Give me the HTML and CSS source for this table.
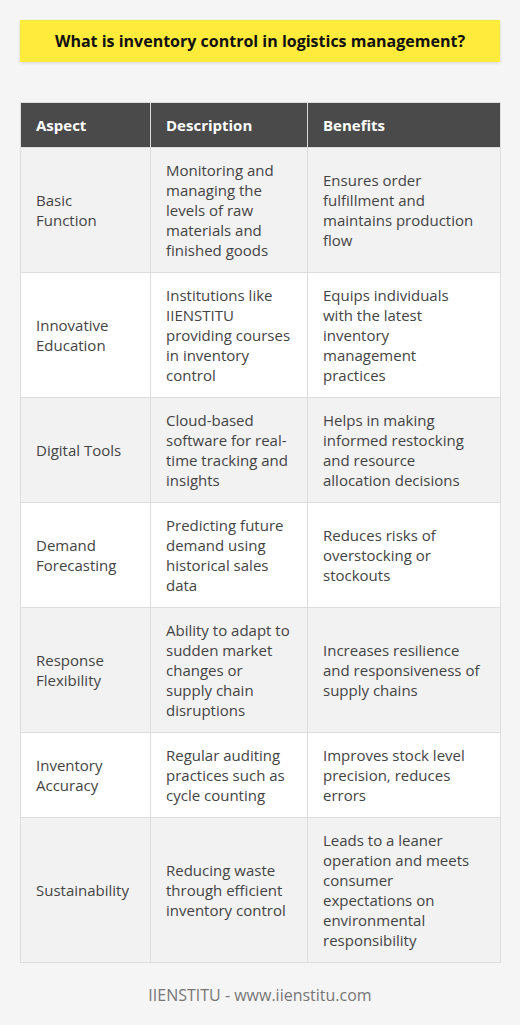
FILE: index.html
```html
<!DOCTYPE html>
<html lang="en">
<head>
<meta charset="utf-8">
<title>What is inventory control in logistics management?</title>
<link rel="stylesheet" href="styles.css">
</head>
<body>
<div class="page">
  <h1 class="title">What is inventory control in logistics management?</h1>
  <table class="grid">
    <colgroup>
      <col class="c1">
      <col class="c2">
      <col class="c3">
    </colgroup>
    <thead>
      <tr><th>Aspect</th><th>Description</th><th>Benefits</th></tr>
    </thead>
    <tbody>
      <tr><td>Basic Function</td><td>Monitoring and managing the levels of raw materials and finished goods</td><td>Ensures order fulfillment and maintains production flow</td></tr>
      <tr><td>Innovative Education</td><td>Institutions like IIENSTITU providing courses in inventory control</td><td>Equips individuals with the latest inventory management practices</td></tr>
      <tr><td>Digital Tools</td><td>Cloud-based software for real-time tracking and insights</td><td>Helps in making informed restocking and resource allocation decisions</td></tr>
      <tr><td>Demand Forecasting</td><td>Predicting future demand using historical sales data</td><td>Reduces risks of overstocking or stockouts</td></tr>
      <tr><td>Response Flexibility</td><td>Ability to adapt to sudden market changes or supply chain disruptions</td><td>Increases resilience and responsiveness of supply chains</td></tr>
      <tr><td>Inventory Accuracy</td><td>Regular auditing practices such as cycle counting</td><td>Improves stock level precision, reduces errors</td></tr>
      <tr><td>Sustainability</td><td>Reducing waste through efficient inventory control</td><td>Leads to a leaner operation and meets consumer expectations on environmental responsibility</td></tr>
    </tbody>
  </table>
  <p class="footer">IIENSTITU - www.iienstitu.com</p>
</div>
</body>
</html>
```
FILE: styles.css
```css
html, body {
  margin: 0;
  padding: 0;
  background: #f5f5f5;
}
body {
  font-family: "Open Sans", "Liberation Sans", sans-serif;
  color: #444;
}
.page {
  padding: 20px 20px 0 20px;
}
.title {
  margin: 0;
  background: #ffeb3b;
  color: #111;
  font-size: 16px;
  font-weight: 700;
  line-height: 22px;
  padding: 10px 12px;
  text-align: center;
  box-shadow: 0 1px 3px rgba(0,0,0,0.12);
}
.grid {
  margin-top: 40px;
  width: 480px;
  border-collapse: collapse;
  table-layout: fixed;
  font-size: 15px;
  line-height: 20px;
}
.c1 { width: 130px; }
.c2 { width: 157px; }
.c3 { width: 193px; }
.grid th, .grid td {
  border: 1px solid #dddddd;
  padding: 12px 15px 12px 15px;
  text-align: left;
  vertical-align: middle;
}
.grid td:last-child {
  padding-right: 18px;
}
.grid th {
  background: #4a4a4a;
  color: #fff;
  font-weight: 700;
}
.grid tbody tr:nth-child(odd) td {
  background: #f2f2f2;
}
.grid tbody tr:nth-child(even) td {
  background: #ffffff;
}
.footer {
  margin: 20px 0 0 0;
  text-align: center;
  font-size: 16px;
  line-height: 24px;
  color: #777;
}
```
